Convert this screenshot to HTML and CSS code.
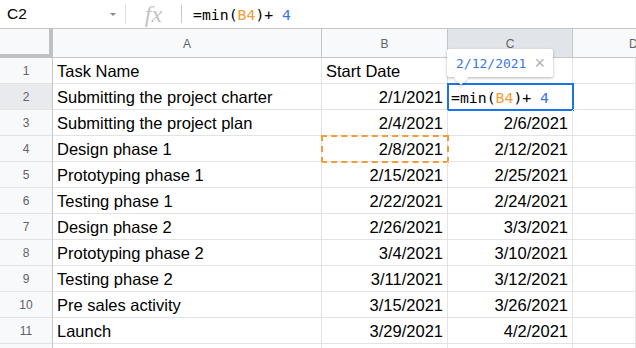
FILE: index.html
```html
<!DOCTYPE html>
<html lang="en">
<head>
    <meta charset="UTF-8">
    <title>Sheet</title>
    <link rel="stylesheet" href="styles.css">
</head>
<body>
    <div class="formula-bar">
        <div class="name-box">C2<span class="caret"></span></div>
        <div class="sep"></div>
        <div class="fx">fx</div>
        <div class="sep short"></div>
        <div class="formula">=min(<span class="ref">B4</span>)+ <span class="num">4</span></div>
    </div>

    <div class="sheet">
        <div class="corner"></div>
        <div class="col-head">A</div>
        <div class="col-head">B</div>
        <div class="col-head selected">C</div>
        <div class="col-head cut">D</div>

        <div class="row-head">1</div>
        <div class="cell">Task Name</div>
        <div class="cell">Start Date</div>
        <div class="cell"></div>
        <div class="cell"></div>

        <div class="row-head selected">2</div>
        <div class="cell">Submitting the project charter</div>
        <div class="cell num">2/1/2021</div>
        <div class="cell active">
            <div class="tip"><span class="tip-val">2/12/2021</span><span class="tip-x">×</span></div>
            <span class="mono">=min(<span class="ref">B4</span>)+ <span class="num-col">4</span></span>
        </div>
        <div class="cell"></div>

        <div class="row-head">3</div>
        <div class="cell">Submitting the project plan</div>
        <div class="cell num">2/4/2021</div>
        <div class="cell num">2/6/2021</div>
        <div class="cell"></div>

        <div class="row-head">4</div>
        <div class="cell">Design phase 1</div>
        <div class="cell num marked">2/8/2021</div>
        <div class="cell num">2/12/2021</div>
        <div class="cell"></div>

        <div class="row-head">5</div>
        <div class="cell">Prototyping phase 1</div>
        <div class="cell num">2/15/2021</div>
        <div class="cell num">2/25/2021</div>
        <div class="cell"></div>

        <div class="row-head">6</div>
        <div class="cell">Testing phase 1</div>
        <div class="cell num">2/22/2021</div>
        <div class="cell num">2/24/2021</div>
        <div class="cell"></div>

        <div class="row-head">7</div>
        <div class="cell">Design phase 2</div>
        <div class="cell num">2/26/2021</div>
        <div class="cell num">3/3/2021</div>
        <div class="cell"></div>

        <div class="row-head">8</div>
        <div class="cell">Prototyping phase 2</div>
        <div class="cell num">3/4/2021</div>
        <div class="cell num">3/10/2021</div>
        <div class="cell"></div>

        <div class="row-head">9</div>
        <div class="cell">Testing phase 2</div>
        <div class="cell num">3/11/2021</div>
        <div class="cell num">3/12/2021</div>
        <div class="cell"></div>

        <div class="row-head">10</div>
        <div class="cell">Pre sales activity</div>
        <div class="cell num">3/15/2021</div>
        <div class="cell num">3/26/2021</div>
        <div class="cell"></div>

        <div class="row-head">11</div>
        <div class="cell">Launch</div>
        <div class="cell num">3/29/2021</div>
        <div class="cell num">4/2/2021</div>
        <div class="cell"></div>

        <div class="row-head"></div>
        <div class="cell"></div>
        <div class="cell"></div>
        <div class="cell"></div>
        <div class="cell"></div>
    </div>
</body>
</html>
```

FILE: styles.css
```css
body {
    margin: 0;
    font-family: "Liberation Sans", Arial, sans-serif;
    color: #000;
    background-color: #fff;
    overflow: hidden;
    width: 636px;
    height: 348px;
}
.formula-bar {
    display: flex;
    align-items: center;
    height: 28px;
    border-bottom: 1px solid #c4c7c5;
}
.name-box {
    display: flex;
    align-items: center;
    width: 125px;
    padding-left: 7px;
    font-size: 15.5px;
    box-sizing: border-box;
}
.caret {
    margin-left: auto;
    margin-right: 9px;
    width: 0;
    height: 0;
    border-left: 3px solid transparent;
    border-right: 3px solid transparent;
    border-top: 3px solid #8a8a8a;
}
.sep {
    width: 1px;
    height: 20px;
    background-color: #e2e2e2;
}
.sep.short {
    height: 18px;
    background-color: #c8c8c8;
}
.fx {
    width: 55px;
    text-align: center;
    font-family: "Liberation Serif", serif;
    font-style: italic;
    font-size: 24px;
    color: #c4c4c4;
    line-height: 22px;
}
.formula {
    padding-left: 11px;
    font-family: "DejaVu Sans Mono", "Liberation Mono", monospace;
    font-size: 14.8px;
}
.ref {
    color: #f29d38;
}
.num-col, .formula .num {
    color: #3b78e7;
}
.sheet {
    display: grid;
    grid-template-columns: 53px 269px 126px 125px 1fr;
    grid-template-rows: 29px;
    grid-auto-rows: 26px;
    height: 319px;
    overflow: hidden;
}
.corner {
    background-color: #f8f9fa;
    border-right: 4px solid #c0c0c0;
    border-bottom: 4px solid #c0c0c0;
}
.col-head {
    display: flex;
    align-items: center;
    justify-content: center;
    font-size: 12px;
    color: #5f6368;
    background-color: #f8f9fa;
    border-right: 1px solid #c4c7c5;
    border-bottom: 1px solid #c4c7c5;
    padding-top: 2px;
    box-sizing: border-box;
}
.col-head.cut {
    justify-content: flex-start;
    padding-left: 56px;
    border-right: none;
    overflow: hidden;
}
.col-head.selected {
    background-color: #e1e5ea;
}
.row-head {
    display: flex;
    align-items: center;
    justify-content: center;
    font-size: 12px;
    color: #5f6368;
    background-color: #f8f9fa;
    border-right: 1px solid #c4c7c5;
    border-bottom: 1px solid #e3e3e3;
    padding-top: 1px;
    box-sizing: border-box;
}
.row-head.selected {
    background-color: #e8eaed;
}
.cell {
    display: flex;
    align-items: center;
    padding: 2px 4px 0 4px;
    font-size: 16.5px;
    border-right: 1px solid #e2e3e3;
    border-bottom: 1px solid #e2e3e3;
    box-sizing: border-box;
    white-space: nowrap;
    position: relative;
}
.cell.num {
    justify-content: flex-end;
}
.cell.marked::after {
    content: "";
    position: absolute;
    top: -1px;
    left: -1px;
    right: -2px;
    bottom: -2px;
    border: 2px dashed #f29d38;
}
.cell.active {
    padding-left: 3px;
}
.cell.active::after {
    content: "";
    position: absolute;
    top: -1px;
    left: -1px;
    right: -2px;
    bottom: -2px;
    border: 2px solid #1a73e8;
}
.mono {
    font-family: "DejaVu Sans Mono", "Liberation Mono", monospace;
    font-size: 14.8px;
}
.tip {
    position: absolute;
    left: -1px;
    bottom: 32px;
    z-index: 2;
    display: flex;
    align-items: center;
    height: 28px;
    padding: 0 8px 0 9px;
    background-color: #fff;
    box-shadow: 0 1px 3px rgba(0, 0, 0, 0.3);
    border-radius: 2px;
}
.tip::after {
    content: "";
    position: absolute;
    left: 9px;
    bottom: -6px;
    width: 10px;
    height: 10px;
    background-color: #fff;
    transform: rotate(45deg);
    box-shadow: 2px 2px 2px rgba(0, 0, 0, 0.12);
}
.tip-val {
    font-family: "DejaVu Sans Mono", "Liberation Mono", monospace;
    font-size: 13px;
    color: #3b78e7;
}
.tip-x {
    margin-left: 8px;
    font-size: 18px;
    color: #b0b0b0;
}
```
